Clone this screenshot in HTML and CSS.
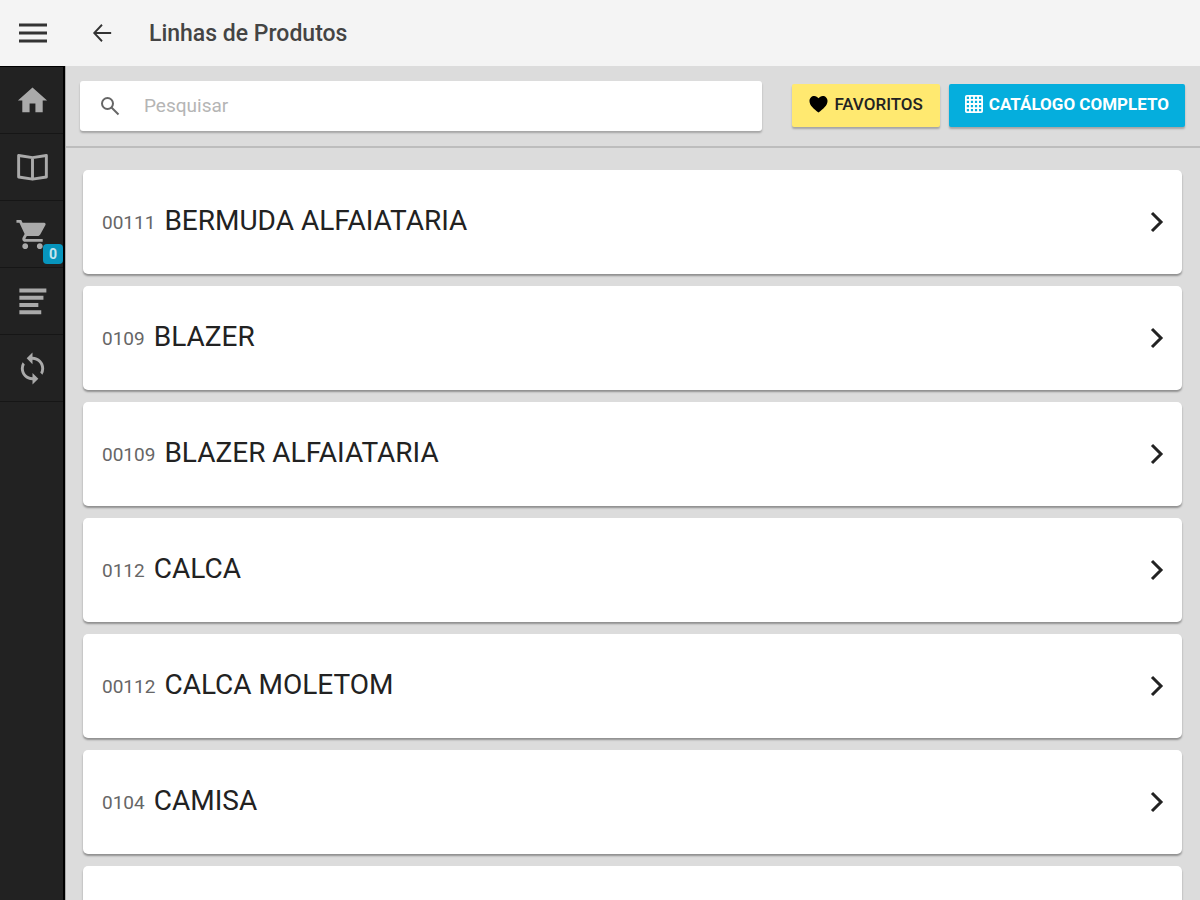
FILE: index.html
```html
<!DOCTYPE html>
<html lang="pt-BR">
<head>
    <meta charset="UTF-8">
    <meta name="viewport" content="width=device-width, initial-scale=1.0">
    <title>Linhas de Produtos</title>
    <link rel="stylesheet" href="styles.css">
</head>
<body>
    <header class="header">
        <button class="menu-button" type="button" aria-label="Menu">
            <svg viewBox="0 0 30 22"><path d="M1 3h28M1 11h28M1 19h28"/></svg>
        </button>
        <button class="back-button" type="button" aria-label="Voltar">
            <svg viewBox="0 0 24 24"><path d="M22 12H4M12 3L3.500 12l8.500 9"/></svg>
        </button>
        <h1>Linhas de Produtos</h1>
    </header>

    <div class="layout">
        <nav class="sidebar">
            <a href="#" aria-label="Início">
                <svg viewBox="0 0 24 24"><path d="M10 20v-6h4v6h5v-8h3L12 3 2 12h3v8z"/></svg>
            </a>
            <a href="#" aria-label="Catálogo">
                <svg class="outline" viewBox="0 0 24 24"><path d="M12 5.200L2.500 3.800v14.700l9.500 1.500 9.500-1.500V3.800zM12 5.200V20"/></svg>
            </a>
            <a href="#" aria-label="Carrinho">
                <svg viewBox="0 0 24 24"><path d="M7 18c-1.100 0-1.990.9-1.990 2S5.900 22 7 22s2-.9 2-2-.9-2-2-2zM1 2v2h2l3.600 7.590-1.350 2.450c-.16.28-.25.61-.25.96 0 1.100.9 2 2 2h12v-2H7.420c-.14 0-.25-.11-.25-.25l.03-.12.900-1.630h7.450c.75 0 1.410-.41 1.750-1.030l3.580-6.490A1 1 0 0 0 20 4H5.210l-.94-2H1zm16 16c-1.100 0-1.990.9-1.990 2s.89 2 1.990 2 2-.9 2-2-.9-2-2-2z"/></svg>
                <span class="badge">0</span>
            </a>
            <a href="#" aria-label="Pedidos">
                <svg viewBox="0 0 24 24"><path d="M3 3h18.500v2.800H3zM3 8h16.500v2.800H3zM3 13h13v2.800H3zM3 18h15v2.800H3z"/></svg>
            </a>
            <a href="#" aria-label="Sincronizar">
                <svg viewBox="0 0 24 24"><path d="M12 4V1L8 5l4 4V6c3.310 0 6 2.690 6 6 0 1.010-.25 1.970-.7 2.800l1.460 1.460A7.930 7.930 0 0 0 20 12c0-4.420-3.580-8-8-8zm0 14c-3.310 0-6-2.690-6-6 0-1.010.25-1.970.7-2.800L5.240 7.740A7.930 7.930 0 0 0 4 12c0 4.420 3.580 8 8 8v3l4-4-4-4v3z"/></svg>
            </a>
        </nav>

        <main class="content">
            <div class="toolbar">
                <label class="search">
                    <svg viewBox="0 0 20 20"><circle cx="7.500" cy="7.500" r="5.500"/><path d="M11.500 11.500l7 7"/></svg>
                    <input type="text" placeholder="Pesquisar" aria-label="Pesquisar">
                </label>
                <div class="actions">
                    <button class="btn btn-favorites" type="button">
                        <svg viewBox="0 0 20 18"><path d="M10 18C5 14 .5 10.500.5 5.800.5 2.700 2.800.5 5.500.5 7.400.5 9 1.500 10 3 11 1.500 12.600.5 14.500.5c2.700 0 5 2.200 5 5.300C19.500 10.500 15 14 10 18z"/></svg>
                        FAVORITOS
                    </button>
                    <button class="btn btn-catalog" type="button">
                        <svg class="grid-icon" viewBox="0 0 20 20"><rect x="1" y="1" width="18" height="18" rx="1"/><path d="M1 5.500h18M1 10h18M1 14.500h18M5.500 1v18M10 1v18M14.500 1v18"/></svg>
                        CATÁLOGO COMPLETO
                    </button>
                </div>
            </div>

            <div class="list">
                <a class="card" href="#">
                    <span class="code">00111</span>
                    <span class="name">BERMUDA ALFAIATARIA</span>
                    <svg viewBox="0 0 14 22"><path d="M2 2l9 9-9 9"/></svg>
                </a>
                <a class="card" href="#">
                    <span class="code">0109</span>
                    <span class="name">BLAZER</span>
                    <svg viewBox="0 0 14 22"><path d="M2 2l9 9-9 9"/></svg>
                </a>
                <a class="card" href="#">
                    <span class="code">00109</span>
                    <span class="name">BLAZER ALFAIATARIA</span>
                    <svg viewBox="0 0 14 22"><path d="M2 2l9 9-9 9"/></svg>
                </a>
                <a class="card" href="#">
                    <span class="code">0112</span>
                    <span class="name">CALCA</span>
                    <svg viewBox="0 0 14 22"><path d="M2 2l9 9-9 9"/></svg>
                </a>
                <a class="card" href="#">
                    <span class="code">00112</span>
                    <span class="name">CALCA MOLETOM</span>
                    <svg viewBox="0 0 14 22"><path d="M2 2l9 9-9 9"/></svg>
                </a>
                <a class="card" href="#">
                    <span class="code">0104</span>
                    <span class="name">CAMISA</span>
                    <svg viewBox="0 0 14 22"><path d="M2 2l9 9-9 9"/></svg>
                </a>
                <div class="card"></div>
            </div>
        </main>
    </div>
</body>
</html>
```
FILE: styles.css
```css
* {
    box-sizing: border-box;
}
body {
    font-family: Roboto, "Liberation Sans", sans-serif;
    background-color: #dcdcdc;
    color: #222;
    display: flex;
    flex-direction: column;
    height: 100vh;
    margin: 0;
    overflow: hidden;
}
button {
    border: none;
    padding: 0;
    font-family: inherit;
    cursor: pointer;
}
svg {
    display: block;
    flex: none;
}
.header {
    display: flex;
    align-items: center;
    height: 66px;
    flex: none;
    background-color: #f4f4f4;
}
.header button {
    background: none;
}
.header svg {
    fill: none;
    stroke: #333;
}
.header h1 {
    margin: 0 0 0 36px;
    font-size: 23px;
    font-weight: 500;
    color: #444;
}
.menu-button {
    padding: 0 18px;
}
.menu-button svg {
    width: 30px;
    height: 22px;
    stroke-width: 3;
}
.back-button {
    margin-left: 25px;
}
.back-button svg {
    width: 22px;
    height: 22px;
    stroke-width: 2;
}
.layout {
    display: flex;
    flex: 1;
    min-height: 0;
}
.sidebar {
    width: 65px;
    flex: none;
    background-color: #222;
    border-top: 1px solid #000;
    border-right: 2px solid #000;
}
.sidebar a {
    position: relative;
    display: flex;
    align-items: center;
    justify-content: center;
    height: 67px;
    padding-left: 2px;
    border-bottom: 1px solid #161616;
}
.sidebar svg {
    width: 35px;
    height: 35px;
    fill: #aaa;
}
.sidebar .outline {
    fill: none;
    stroke: #aaa;
    stroke-width: 2;
    stroke-linejoin: round;
}
.badge {
    position: absolute;
    right: 0;
    bottom: 3px;
    width: 20px;
    height: 20px;
    border-radius: 4px;
    background-color: #0795bd;
    color: #c5e5ee;
    font-size: 14px;
    font-weight: 700;
    line-height: 20px;
    text-align: center;
}
.content {
    display: flex;
    flex-direction: column;
    flex: 1;
    min-width: 0;
    border-left: 1px solid #aaa;
}
.toolbar {
    display: flex;
    align-items: flex-start;
    justify-content: space-between;
    gap: 30px;
    height: 82px;
    flex: none;
    padding: 15px 15px 0 14px;
    border-bottom: 2px solid #bdbdbd;
}
.search {
    display: flex;
    align-items: center;
    flex: 1;
    height: 50px;
    padding: 0 20px;
    background-color: #fff;
    border-radius: 3px;
    box-shadow: 0 2px 2px rgba(0, 0, 0, 0.25);
}
.search svg {
    width: 20px;
    height: 20px;
    fill: none;
    stroke: #666;
    stroke-width: 2;
}
.search input {
    flex: 1;
    min-width: 0;
    margin-left: 24px;
    padding: 0 0 2px;
    border: none;
    outline: none;
    background: none;
    font-family: inherit;
    font-size: 19px;
}
.search input::placeholder {
    color: #b5b5b5;
}
.actions {
    display: flex;
    gap: 9px;
    padding-top: 3px;
}
.btn {
    display: flex;
    align-items: center;
    gap: 6px;
    height: 43px;
    padding: 0 17px 3px;
    border-radius: 2px;
    font-size: 17px;
    font-weight: 500;
    box-shadow: 0 2px 2px rgba(0, 0, 0, 0.25);
}
.btn svg {
    width: 19px;
    height: 18px;
}
.btn-favorites {
    background-color: #ffe970;
    color: #222;
}
.btn-catalog {
    padding: 0 16px 3px;
    background-color: #05aedd;
    color: #fff;
    font-weight: 700;
}
.btn .grid-icon {
    width: 18px;
    fill: none;
    stroke: #fff;
    stroke-width: 2;
}
.list {
    display: flex;
    flex-direction: column;
    gap: 12px;
    flex: 1;
    min-height: 0;
    padding: 22px 18px 0 17px;
    overflow: hidden;
}
.card {
    display: flex;
    align-items: center;
    gap: 9px;
    height: 104px;
    flex: none;
    padding: 0 18px 0 19px;
    background-color: #fff;
    border-radius: 5px;
    box-shadow: 0 2px 2px rgba(0, 0, 0, 0.35);
    color: #222;
    text-decoration: none;
}
.card .code {
    font-size: 19px;
    color: #666;
}
.card .name {
    flex: 1;
    padding-bottom: 3px;
    font-size: 28px;
}
.card svg {
    width: 14px;
    height: 22px;
    fill: none;
    stroke: #222;
    stroke-width: 3;
}
```
